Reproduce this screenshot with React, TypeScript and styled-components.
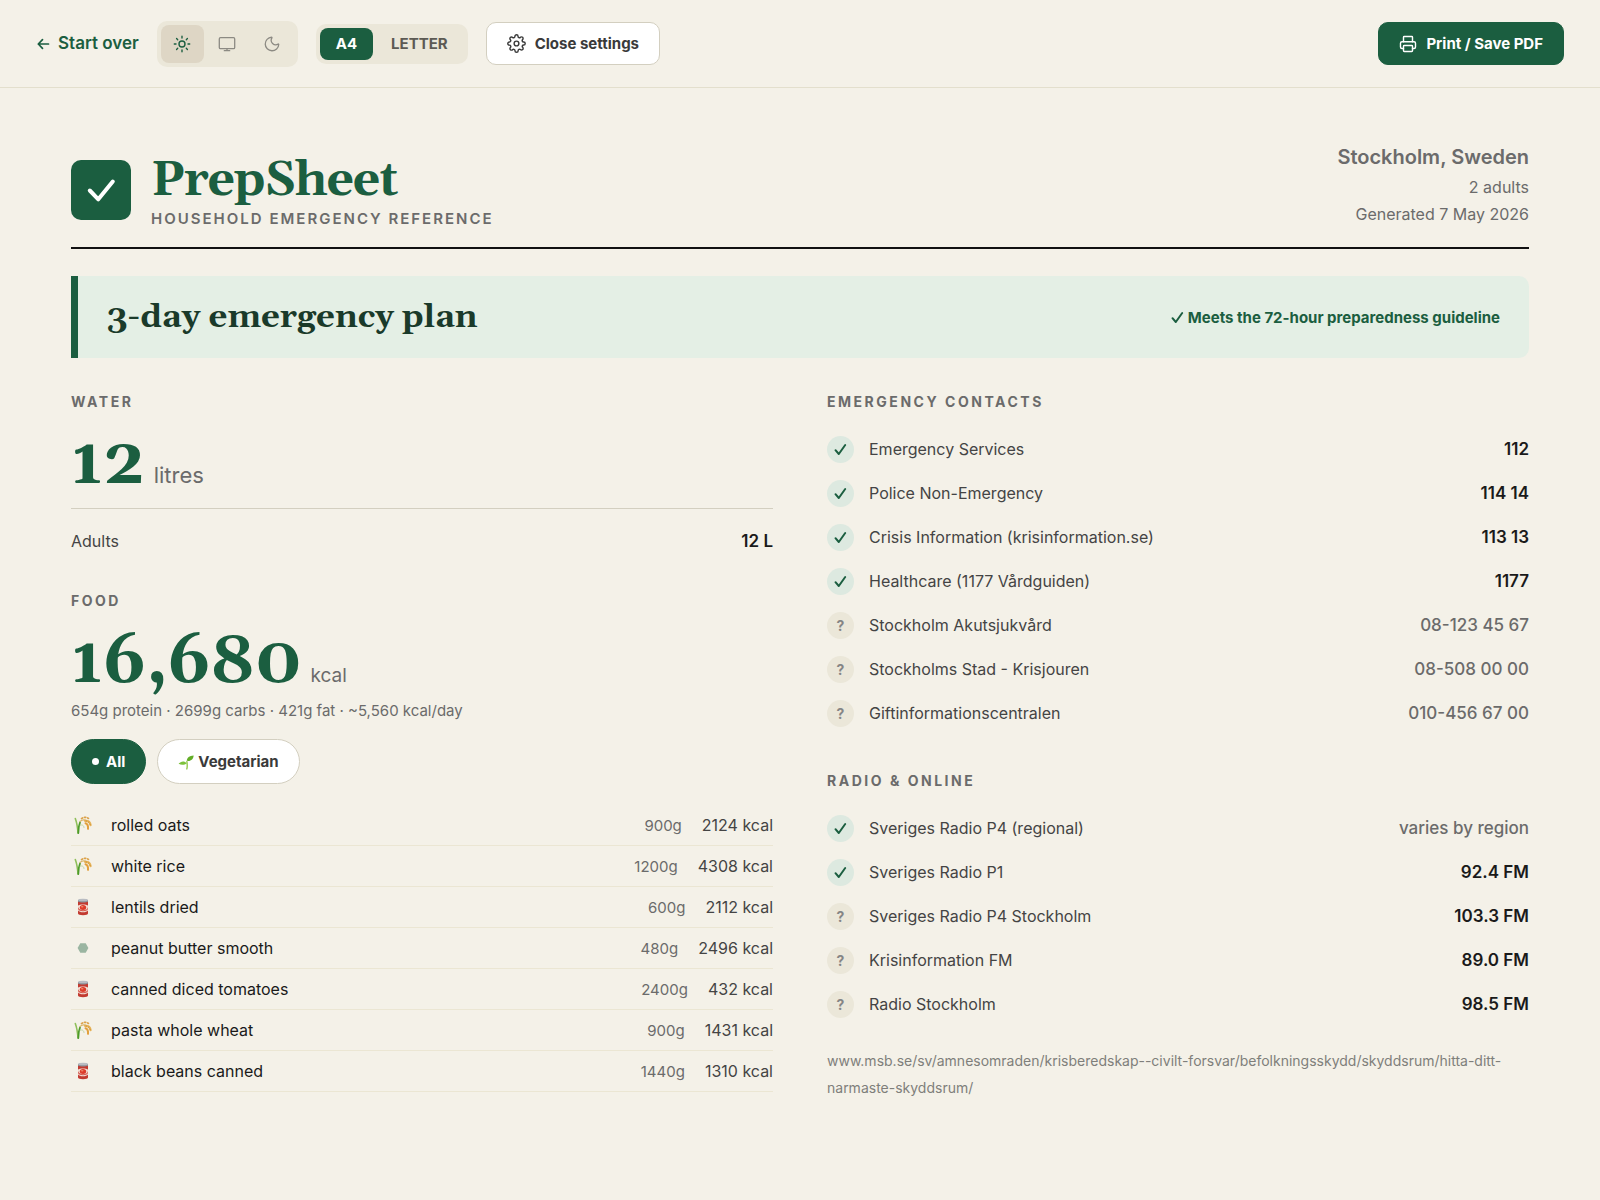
import React, { useState } from "react";
import styled, { createGlobalStyle } from "styled-components";
import { Moon, Printer } from "lucide-react";
import { FiSettings } from "react-icons/fi";

const color = {
  page: "#f4f1e8",
  green: "#1b5e40",
  deepGreen: "#1a3a2a",
  mint: "#e4efe5",
  mintCircle: "#dde9e0",
  sand: "#ebe7d9",
  sandActive: "#ded6c5",
  line: "#ebe6d3",
  rule: "#d3cfc0",
  ink: "#1a1a1a",
  body: "#444444",
  muted: "#6b6b6b",
  faint: "#858585",
};

const sans = `Inter, "Liberation Sans", sans-serif`;
const serif = `Georgia, Gelasio, "DejaVu Serif", serif`;

const GlobalStyle = createGlobalStyle`
  *, *::before, *::after { box-sizing: border-box; }
  body { margin: 0; background: ${color.page}; color: ${color.ink}; font-family: ${sans}; font-size: 16px; line-height: 27px; }
  h1, h2, h3, p, ul { margin: 0; padding: 0; }
  ul { list-style: none; }
  button { font: inherit; margin: 0; border: 0; cursor: pointer; }
`;

const Toolbar = styled.header`
  display: flex;
  align-items: center;
  gap: 18px;
  height: 88px;
  padding: 0 36px;
  border-bottom: 1px solid #e3dfcd;
`;

const BackLink = styled.a`
  display: flex;
  align-items: center;
  gap: 8px;
  color: ${color.green};
  font-size: 17px;
  font-weight: 600;
  text-decoration: none;
`;

const ThemeGroup = styled.div`
  display: flex;
  gap: 2px;
  padding: 4px;
  border-radius: 10px;
  background: ${color.sand};
`;

const ThemeButton = styled.button<{ $active: boolean }>`
  display: flex;
  align-items: center;
  justify-content: center;
  width: 43px;
  height: 38px;
  padding: 0;
  border-radius: 8px;
  background: ${(p) => (p.$active ? color.sandActive : "transparent")};
  color: ${(p) => (p.$active ? color.green : "#8c8a83")};
`;

const PaperGroup = styled.div`
  display: flex;
  gap: 2px;
  padding: 4px;
  border-radius: 10px;
  background: ${color.sand};
`;

const PaperButton = styled.button<{ $active: boolean }>`
  height: 32px;
  padding: 0 16px;
  border-radius: 8px;
  background: ${(p) => (p.$active ? color.green : "transparent")};
  color: ${(p) => (p.$active ? "#ffffff" : "#5c5a54")};
  font-size: 15px;
  font-weight: 700;
`;

const ActionButton = styled.button<{ $primary?: boolean }>`
  display: flex;
  align-items: center;
  gap: 9px;
  height: 43px;
  padding: 0 20px;
  border: 1px solid ${(p) => (p.$primary ? color.green : color.rule)};
  border-radius: 10px;
  background: ${(p) => (p.$primary ? color.green : "#ffffff")};
  color: ${(p) => (p.$primary ? "#ffffff" : "#3a3a3a")};
  font-size: 15px;
  font-weight: 700;
`;

const Spacer = styled.div`
  flex: 1;
`;

const Sheet = styled.main`
  padding: 54px 71px 100px;
`;

const SheetHeader = styled.div`
  display: flex;
  align-items: flex-end;
  justify-content: space-between;
  padding-bottom: 19px;
  border-bottom: 2px solid #111111;
`;

const Brand = styled.div`
  display: flex;
  align-items: center;
  gap: 20px;
`;

const BrandMark = styled.div`
  width: 60px;
  height: 60px;
  border-radius: 10px;
  background: ${color.green};
  color: #ffffff;
`;

const BrandName = styled.h1`
  color: ${color.green};
  font-family: ${serif};
  font-size: 48px;
  font-weight: 700;
  letter-spacing: -1px;
  line-height: 58px;
`;

const Eyebrow = styled.p`
  color: ${color.muted};
  font-size: 15px;
  font-weight: 600;
  letter-spacing: 2px;
  line-height: 18px;
  text-transform: uppercase;
`;

const Place = styled.div`
  color: ${color.muted};
  text-align: right;
`;

const PlaceName = styled.p`
  margin-bottom: 2px;
  font-size: 20px;
  font-weight: 600;
  line-height: 30px;
`;

const Banner = styled.section`
  display: flex;
  align-items: center;
  justify-content: space-between;
  min-height: 82px;
  margin-top: 27px;
  padding: 0 29px;
  border-left: 7px solid ${color.green};
  border-radius: 0 10px 10px 0;
  background: ${color.mint};
`;

const BannerTitle = styled.h2`
  color: ${color.deepGreen};
  font-family: ${serif};
  font-size: 33px;
  font-weight: 700;
  line-height: 40px;
`;

const BannerNote = styled.p`
  display: flex;
  align-items: center;
  gap: 4px;
  color: ${color.green};
  font-size: 15px;
  font-weight: 700;
`;

const Columns = styled.div`
  display: grid;
  grid-template-columns: 1fr 1fr;
  gap: 54px;
  margin-top: 35px;
`;

const SectionTitle = styled.h3`
  color: ${color.muted};
  font-size: 14px;
  font-weight: 700;
  letter-spacing: 0.18em;
  line-height: 18px;
  text-transform: uppercase;
`;

const Section = styled.section`
  & + & {
    margin-top: 37px;
  }
`;

const Total = styled.p<{ $unit: number }>`
  display: flex;
  align-items: baseline;
  gap: 9px;
  margin-top: 20px;
  color: ${color.muted};
  font-size: ${(p) => p.$unit}px;
  line-height: 24px;
`;

const TotalValue = styled.strong`
  color: ${color.green};
  font-family: ${serif};
  font-size: 66px;
  font-weight: 700;
  line-height: 66px;
`;

const Breakdown = styled.p`
  display: flex;
  justify-content: space-between;
  margin-top: 11px;
  padding-top: 19px;
  border-top: 1px solid ${color.rule};
  color: ${color.body};

  strong {
    color: ${color.ink};
    font-size: 17px;
    font-weight: 600;
  }
`;

const Macros = styled.p`
  margin-top: 1px;
  color: ${color.muted};
  font-size: 15px;
`;

const Filters = styled.div`
  display: flex;
  gap: 11px;
  margin-top: 15px;
`;

const FilterButton = styled.button<{ $active: boolean }>`
  display: flex;
  align-items: center;
  gap: 4px;
  height: 45px;
  padding: 0 20px;
  border: 1px solid ${(p) => (p.$active ? color.green : color.rule)};
  border-radius: 23px;
  background: ${(p) => (p.$active ? color.green : "#ffffff")};
  color: ${(p) => (p.$active ? "#ffffff" : "#3a3a3a")};
  font-size: 15px;
  font-weight: 700;
`;

const Dot = styled.span`
  width: 7px;
  height: 7px;
  margin-right: 3px;
  border-radius: 50%;
  background: currentColor;
`;

const FoodList = styled.ul`
  margin-top: 21px;
`;

const FoodRow = styled.li`
  display: flex;
  align-items: center;
  height: 41px;
  border-bottom: 1px solid ${color.line};
`;

const FoodIcon = styled.span`
  display: flex;
  justify-content: center;
  width: 24px;
  margin-right: 16px;
`;

const FoodName = styled.span`
  flex: 1;
`;

const Amount = styled.span`
  margin-right: 20px;
  color: ${color.muted};
  font-size: 15px;
`;

const Energy = styled.span`
  color: ${color.body};
`;

const ContactList = styled.ul`
  margin-top: 16px;
`;

const ContactRow = styled.li`
  display: flex;
  align-items: center;
  gap: 15px;
  height: 44px;
`;

const Status = styled.span<{ $verified: boolean }>`
  display: flex;
  align-items: center;
  justify-content: center;
  width: 27px;
  height: 27px;
  border-radius: 50%;
  background: ${(p) => (p.$verified ? color.mintCircle : color.sand)};
  color: ${(p) => (p.$verified ? color.green : color.faint)};
  font-size: 14px;
  font-weight: 700;
`;

const ContactName = styled.span`
  flex: 1;
  color: ${color.body};
`;

const ContactValue = styled.span<{ $strong: boolean }>`
  color: ${(p) => (p.$strong ? color.ink : color.muted)};
  font-size: 17px;
  font-weight: ${(p) => (p.$strong ? 600 : 500)};
`;

const SourceNote = styled.p`
  margin-top: 21px;
  color: #7f7f7b;
  font-size: 14px;
`;

const BackArrow = () => (
  <svg width="14" height="14" viewBox="0 0 14 14" fill="none" stroke="currentColor" strokeWidth="1.700" strokeLinecap="round" strokeLinejoin="round" aria-hidden="true">
    <path d="M12.500 7H2.300M6.500 2.700L2.300 7l4.200 4.300" />
  </svg>
);

const SunIcon = () => (
  <svg width="18" height="18" viewBox="0 0 18 18" fill="none" stroke="currentColor" strokeWidth="1.400" strokeLinecap="round" aria-hidden="true">
    <circle cx="9" cy="9" r="3" />
    <path d="M9 1.300v1.700M9 15v1.700M1.300 9h1.700M15 9h1.700M3.600 3.600l1.100 1.100M13.300 13.300l1.100 1.100M3.600 14.400l1.100-1.100M13.300 4.700l1.100-1.100" />
  </svg>
);

const ScreenIcon = () => (
  <svg width="18" height="18" viewBox="0 0 18 18" fill="none" stroke="currentColor" strokeWidth="1.300" strokeLinecap="round" aria-hidden="true">
    <rect x="1.300" y="2.700" width="15.400" height="11" rx="1.200" />
    <path d="M9 13.700v2M6.300 15.700h5.400" />
  </svg>
);

const MoonIcon = () => <Moon size={18} strokeWidth={1.7} aria-hidden="true" />;

const LogoMark = () => (
  <svg width="60" height="60" viewBox="0 0 60 60" fill="none" aria-hidden="true">
    <path d="M18.800 30.500L27.300 39.300L41.800 21.500" stroke="currentColor" strokeWidth="4" strokeLinecap="round" strokeLinejoin="round" />
  </svg>
);

const RiceIcon = () => (
  <svg width="18" height="18" viewBox="0 0 18 18" fill="none" strokeLinecap="round" aria-hidden="true">
    <path d="M4 17C3.600 11 2.600 6 1.300 2.500" stroke="#8fbf5a" strokeWidth="1.600" />
    <path d="M4.300 17C4.300 12 5 9 6 6.500" stroke="#4c9a2a" strokeWidth="1.800" />
    <path d="M6 9.500C8 8 10 9.500 10 11.500" stroke="#c3d6a0" strokeWidth="1" />
    <path d="M6 5.500C8 3.800 11 3.600 13 5" stroke="#d8b366" strokeWidth="1.200" />
    <path d="M7.500 2.600C10 .9 12.500 1.200 14.500 2.400" stroke="#dba24a" strokeWidth="1.700" strokeDasharray="1.200 2" />
    <path d="M11 4.800C14.200 4.600 16.300 6.500 16.600 9.200" stroke="#e6b257" strokeWidth="2.200" />
    <path d="M11.500 7.200C13.600 8 14.300 10 14 12.800" stroke="#e2a03c" strokeWidth="2" />
    <path d="M12 4.900C14.200 5.400 15.900 7 16.300 9.200" stroke="#b97a22" strokeWidth=".6" strokeDasharray=".6 2" />
  </svg>
);

const CanIcon = () => (
  <svg width="18" height="18" viewBox="0 0 18 18" aria-hidden="true">
    <path d="M4 2.300h10v13.200c0 1-2 1.700-5 1.700s-5-.7-5-1.700z" fill="#c23a30" />
    <path d="M4 7.600C5.500 6 12.500 6 14 7.600v4.800C12.500 14.800 5.500 14.800 4 12.400z" fill="#f0dcd3" />
    <path d="M4 9c.6 4 9.400 4.500 10 0v2c-1 3-9 3-10 0z" fill="#d6564a" />
    <ellipse cx="9" cy="9.600" rx="3.200" ry="2.500" fill="#dd3b2a" />
    <ellipse cx="8.200" cy="8.800" rx="1.300" ry=".8" fill="#f08a6a" />
    <path d="M4 2v1.800c2 1 8 1 10 0V2z" fill="#8d9097" />
    <ellipse cx="9" cy="2" rx="5" ry="1.300" fill="#b9bcc2" />
  </svg>
);

const HexIcon = () => (
  <svg width="18" height="18" viewBox="0 0 18 18" aria-hidden="true">
    <path d="M3.600 9l2.700-4.800h5.400L14.400 9l-2.700 4.800H6.300z" fill="#9ab5a1" />
  </svg>
);

const SproutIcon = () => (
  <svg width="16" height="16" viewBox="0 0 16 16" aria-hidden="true">
    <path d="M8.800 15C9.600 12.500 9.200 10 8.900 7.500" stroke="#8cc63f" strokeWidth="1.300" fill="none" strokeLinecap="round" />
    <path d="M8.800 6.800C8.800 3.500 11.500 1.600 15.600 1.400C15.400 5 13 7.400 8.800 6.800z" fill="#62ad27" />
    <path d="M8.700 9.200C6.500 6.400 2.600 7 .6 9.800C3.500 11.200 6.500 11 8.700 9.200z" fill="#7cc23a" />
  </svg>
);

const CheckMark = () => (
  <svg width="13" height="13" viewBox="0 0 13 13" fill="none" aria-hidden="true">
    <path d="M1.500 7.200L4.800 11L11.200 2" stroke="currentColor" strokeWidth="2" strokeLinecap="round" strokeLinejoin="round" />
  </svg>
);

const foodIcons = { rice: RiceIcon, can: CanIcon, hex: HexIcon };

const foods: { icon: keyof typeof foodIcons; name: string; amount: string; energy: string }[] = [
  { icon: "rice", name: "rolled oats", amount: "900g", energy: "2124 kcal" },
  { icon: "rice", name: "white rice", amount: "1200g", energy: "4308 kcal" },
  { icon: "can", name: "lentils dried", amount: "600g", energy: "2112 kcal" },
  { icon: "hex", name: "peanut butter smooth", amount: "480g", energy: "2496 kcal" },
  { icon: "can", name: "canned diced tomatoes", amount: "2400g", energy: "432 kcal" },
  { icon: "rice", name: "pasta whole wheat", amount: "900g", energy: "1431 kcal" },
  { icon: "can", name: "black beans canned", amount: "1440g", energy: "1310 kcal" },
];

type Contact = { name: string; value: string; verified: boolean; strong: boolean };

const contacts: Contact[] = [
  { name: "Emergency Services", value: "112", verified: true, strong: true },
  { name: "Police Non-Emergency", value: "114 14", verified: true, strong: true },
  { name: "Crisis Information (krisinformation.se)", value: "113 13", verified: true, strong: true },
  { name: "Healthcare (1177 Vårdguiden)", value: "1177", verified: true, strong: true },
  { name: "Stockholm Akutsjukvård", value: "08-123 45 67", verified: false, strong: false },
  { name: "Stockholms Stad - Krisjouren", value: "08-508 00 00", verified: false, strong: false },
  { name: "Giftinformationscentralen", value: "010-456 67 00", verified: false, strong: false },
];

const stations: Contact[] = [
  { name: "Sveriges Radio P4 (regional)", value: "varies by region", verified: true, strong: false },
  { name: "Sveriges Radio P1", value: "92.4 FM", verified: true, strong: true },
  { name: "Sveriges Radio P4 Stockholm", value: "103.3 FM", verified: false, strong: true },
  { name: "Krisinformation FM", value: "89.0 FM", verified: false, strong: true },
  { name: "Radio Stockholm", value: "98.5 FM", verified: false, strong: true },
];

const Contacts = ({ items }: { items: Contact[] }) => (
  <ContactList>
    {items.map((c) => (
      <ContactRow key={c.name}>
        <Status $verified={c.verified}>{c.verified ? <CheckMark /> : "?"}</Status>
        <ContactName>{c.name}</ContactName>
        <ContactValue $strong={c.strong}>{c.value}</ContactValue>
      </ContactRow>
    ))}
  </ContactList>
);

const themes = [
  { id: "light", label: "Light theme", Icon: SunIcon },
  { id: "system", label: "System theme", Icon: ScreenIcon },
  { id: "dark", label: "Dark theme", Icon: MoonIcon },
];

export default function App() {
  const [theme, setTheme] = useState("light");
  const [paper, setPaper] = useState("A4");
  const [diet, setDiet] = useState("all");

  return (
    <>
      <GlobalStyle />
      <Toolbar>
        <BackLink href="#start">
          <BackArrow />
          Start over
        </BackLink>
        <ThemeGroup role="group" aria-label="Theme">
          {themes.map(({ id, label, Icon }) => (
            <ThemeButton key={id} $active={theme === id} aria-pressed={theme === id} aria-label={label} onClick={() => setTheme(id)}>
              <Icon />
            </ThemeButton>
          ))}
        </ThemeGroup>
        <PaperGroup role="group" aria-label="Paper size">
          {["A4", "LETTER"].map((size) => (
            <PaperButton key={size} $active={paper === size} aria-pressed={paper === size} onClick={() => setPaper(size)}>
              {size}
            </PaperButton>
          ))}
        </PaperGroup>
        <ActionButton>
          <FiSettings size={19} strokeWidth={1.8} aria-hidden="true" />
          Close settings
        </ActionButton>
        <Spacer />
        <ActionButton $primary>
          <Printer size={18} strokeWidth={1.9} aria-hidden="true" />
          Print / Save PDF
        </ActionButton>
      </Toolbar>

      <Sheet>
        <SheetHeader>
          <Brand>
            <BrandMark>
              <LogoMark />
            </BrandMark>
            <div>
              <BrandName>PrepSheet</BrandName>
              <Eyebrow>Household emergency reference</Eyebrow>
            </div>
          </Brand>
          <Place>
            <PlaceName>Stockholm, Sweden</PlaceName>
            <p>2 adults</p>
            <p>Generated 7 May 2026</p>
          </Place>
        </SheetHeader>

        <Banner>
          <BannerTitle>3-day emergency plan</BannerTitle>
          <BannerNote>
            <CheckMark />
            Meets the 72-hour preparedness guideline
          </BannerNote>
        </Banner>

        <Columns>
          <div>
            <Section>
              <SectionTitle>Water</SectionTitle>
              <Total $unit={22}>
                <TotalValue>12</TotalValue> litres
              </Total>
              <Breakdown>
                <span>Adults</span>
                <strong>12 L</strong>
              </Breakdown>
            </Section>
            <Section>
              <SectionTitle>Food</SectionTitle>
              <Total $unit={19}>
                <TotalValue>16,680</TotalValue> kcal
              </Total>
              <Macros>654g protein · 2699g carbs · 421g fat · ~5,560 kcal/day</Macros>
              <Filters>
                <FilterButton $active={diet === "all"} aria-pressed={diet === "all"} onClick={() => setDiet("all")}>
                  <Dot />
                  All
                </FilterButton>
                <FilterButton $active={diet === "veg"} aria-pressed={diet === "veg"} onClick={() => setDiet("veg")}>
                  <SproutIcon />
                  Vegetarian
                </FilterButton>
              </Filters>
              <FoodList>
                {foods.map((f) => {
                  const Icon = foodIcons[f.icon];
                  return (
                    <FoodRow key={f.name}>
                      <FoodIcon>
                        <Icon />
                      </FoodIcon>
                      <FoodName>{f.name}</FoodName>
                      <Amount>{f.amount}</Amount>
                      <Energy>{f.energy}</Energy>
                    </FoodRow>
                  );
                })}
              </FoodList>
            </Section>
          </div>
          <div>
            <Section>
              <SectionTitle>Emergency contacts</SectionTitle>
              <Contacts items={contacts} />
            </Section>
            <Section>
              <SectionTitle>Radio &amp; online</SectionTitle>
              <Contacts items={stations} />
              <SourceNote>
                www.msb.se/sv/amnesomraden/krisberedskap--civilt-forsvar/befolkningsskydd/skyddsrum/hitta-ditt-narmaste-skyddsrum/
              </SourceNote>
            </Section>
          </div>
        </Columns>
      </Sheet>
    </>
  );
}
